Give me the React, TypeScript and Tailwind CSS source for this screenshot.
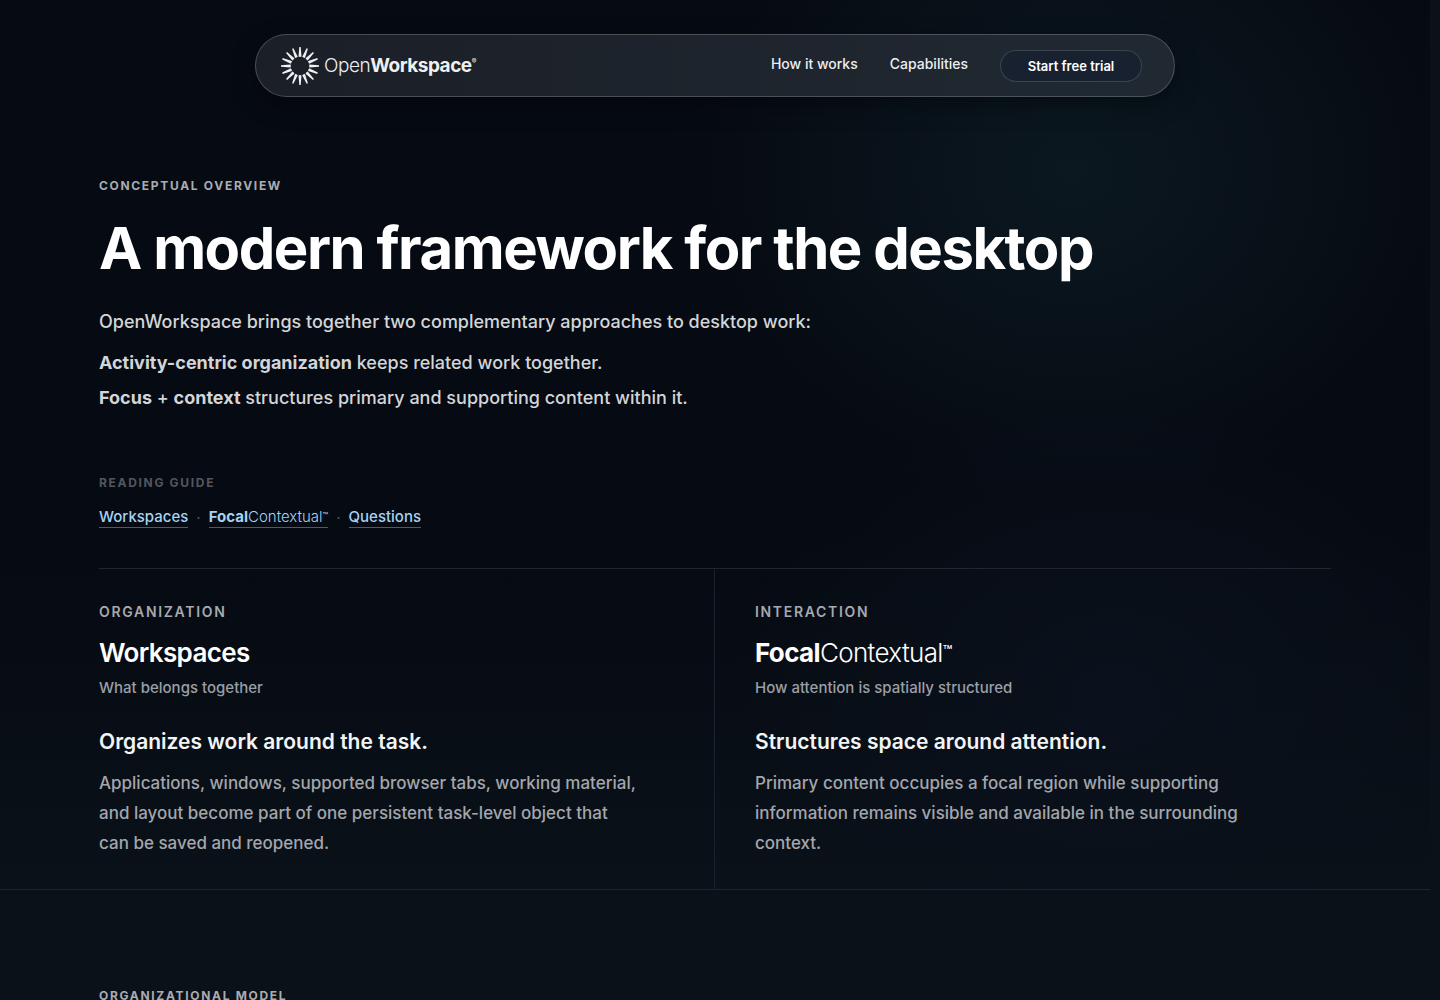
import { clsx } from "clsx";

const rays = [0, 22.5, 45, 67.5, 90, 112.5, 135, 157.5, 180, 202.5, 225, 247.5, 270, 292.5, 315, 337.5];

const LogoMark = () => (
  <svg viewBox="0 0 40 40" className="size-10" fill="#eef0f2" aria-hidden="true">
    {rays.map((angle) => (
      <path key={angle} d="M19.3 1h1.4l.8 9.6q-1.5.6-3 0z" transform={`rotate(${angle} 20 20)`} />
    ))}
  </svg>
);

const Eyebrow = ({ children, className }: { children: string; className?: string }) => (
  <p className={clsx("text-xs leading-4 font-bold tracking-[0.14em] uppercase", className)}>{children}</p>
);

const FocalContextual = () => (
  <>
    <strong className="font-bold">Focal</strong>
    <span className="font-light">
      Contextual<span className="align-[0.3em] text-[0.6em] leading-none font-medium">™</span>
    </span>
  </>
);

const Header = () => (
  <header className="px-6 pt-[34px]">
    <div className="mx-auto flex h-[63px] max-w-[920px] items-center justify-between rounded-full border border-white/20 bg-linear-to-r from-[#1b1f27] to-[#202932] pr-8 pl-6 shadow-[0_8px_24px_rgba(0,0,0,0.35)]">
      <a href="#top" className="flex items-center gap-1 text-[19px] leading-7 text-[#eef0f2]">
        <LogoMark />
        <span className="flex tracking-tight">
          <span className="font-light">Open</span>
          <strong className="font-bold">Workspace</strong>
          <sup className="top-1 text-[7px] leading-3">®</sup>
        </span>
      </a>
      <nav className="flex items-center gap-8 text-sm font-medium text-[#eceef1]">
        <a href="#how" className="pb-1">How it works</a>
        <a href="#capabilities" className="pb-1">Capabilities</a>
        <button type="button" className="h-8 w-[142px] rounded-full border border-white/15 bg-[#182130] pt-px text-[13px] font-semibold text-white">
          Start free trial
        </button>
      </nav>
    </div>
  </header>
);

const linkClass = "border-b border-[#2d6587] text-[#a5d3f3]";

const Hero = () => (
  <div>
    <Eyebrow className="text-[#a9adb3]">Conceptual overview</Eyebrow>
    <h1 className="mt-5 text-[58px] leading-[68px] font-bold tracking-tight text-white">
      A modern framework for the desktop
    </h1>
    <p className="mt-[26px] text-lg leading-7 font-medium text-[#d3d5d8]">
      OpenWorkspace brings together two complementary approaches to desktop work:
    </p>
    <div className="mt-[9px] text-lg leading-[35px] font-medium text-[#d3d5d8]">
      <p>
        <strong className="font-bold">Activity-centric organization</strong> keeps related work together.
      </p>
      <p>
        <strong className="font-bold">Focus</strong> + <strong className="font-bold">context</strong> structures primary and supporting content within it.
      </p>
    </div>
    <Eyebrow className="mt-15 text-[#53575d]">Reading guide</Eyebrow>
    <nav className="mt-4 flex items-center gap-2 text-[15px] leading-5">
      <a href="#workspaces" className={clsx(linkClass, "font-medium")}>Workspaces</a>
      <span className="text-[#4d5359]">·</span>
      <a href="#focal" className={linkClass}>
        <FocalContextual />
      </a>
      <span className="text-[#4d5359]">·</span>
      <a href="#questions" className={clsx(linkClass, "font-medium")}>Questions</a>
    </nav>
  </div>
);

type ConceptProps = {
  label: string;
  title: React.ReactNode;
  subtitle: string;
  heading: string;
  body: string;
  className?: string;
};

const Concept = ({ label, title, subtitle, heading, body, className }: ConceptProps) => (
  <article className={clsx("pt-[35px] pb-[31px]", className)}>
    <p className="text-sm leading-4 font-semibold tracking-[0.12em] text-[#a6a9af] uppercase">{label}</p>
    <h2 className="mt-[17px] text-[26px] leading-8 font-semibold tracking-tight text-white">{title}</h2>
    <p className="mt-[7px] text-[15px] leading-6 font-medium text-[#9b9fa6]">{subtitle}</p>
    <h3 className="mt-7 text-[21px] leading-7 font-semibold text-[#f3f4f5]">{heading}</h3>
    <p className="mt-3 max-w-[540px] text-[17px] leading-[30px] font-medium text-[#a3a6ac]">{body}</p>
  </article>
);

export default function App() {
  return (
    <div id="top" className="min-h-screen bg-[#0a1118] pr-[10px] font-['Inter','Liberation_Sans',sans-serif]">
      <div className="border-b border-[#1e252e] bg-[radial-gradient(ellipse_400px_340px_at_75%_170px,#0b1820_0%,transparent_100%),radial-gradient(ellipse_380px_300px_at_78%_700px,#0a111c_0%,transparent_100%),linear-gradient(to_bottom,#060a12_0%,#060a12_60%,#0a1118_100%)]">
        <Header />
        <main className="mx-auto max-w-[1312px] px-10 pt-[81px]">
          <Hero />
          <section className="mt-10 grid grid-cols-2 border-t border-[#20262e]">
            <Concept
              label="Organization"
              title="Workspaces"
              subtitle="What belongs together"
              heading="Organizes work around the task."
              body="Applications, windows, supported browser tabs, working material, and layout become part of one persistent task-level object that can be saved and reopened."
              className="border-r border-[#1b222b] pr-10"
            />
            <Concept
              label="Interaction"
              title={<FocalContextual />}
              subtitle="How attention is spatially structured"
              heading="Structures space around attention."
              body="Primary content occupies a focal region while supporting information remains visible and available in the surrounding context."
              className="pl-10"
            />
          </section>
        </main>
      </div>
      <section className="mx-auto max-w-[1312px] px-10 pt-[98px]">
        <Eyebrow className="text-[#a9adb3]">Organizational model</Eyebrow>
      </section>
    </div>
  );
}
